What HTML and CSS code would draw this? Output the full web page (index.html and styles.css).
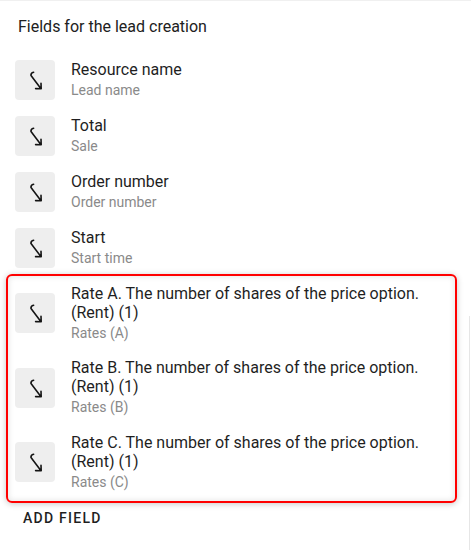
FILE: index.html
```html
<!DOCTYPE html>
<html lang="en">
<head>
<meta charset="utf-8">
<title>Fields for the lead creation</title>
<link rel="stylesheet" href="styles.css">
</head>
<body>
<div class="page">
  <main class="content">
    <h2 class="heading">Fields for the lead creation</h2>
    <ul class="fields">
      <li class="field">
        <span class="field-icon"><svg viewBox="0 0 40 40" width="40" height="40"><path d="M18.6 12.2 Q15.6 12.8 16 15.6 L25.8 28.4 M20.6 28.6 L26.2 28.8 L26 23.4" /></svg></span>
        <div class="field-text"><div class="field-title">Resource name</div><div class="field-sub">Lead name</div></div>
      </li>
      <li class="field">
        <span class="field-icon"><svg viewBox="0 0 40 40" width="40" height="40"><path d="M18.6 12.2 Q15.6 12.8 16 15.6 L25.8 28.4 M20.6 28.6 L26.2 28.8 L26 23.4" /></svg></span>
        <div class="field-text"><div class="field-title">Total</div><div class="field-sub">Sale</div></div>
      </li>
      <li class="field">
        <span class="field-icon"><svg viewBox="0 0 40 40" width="40" height="40"><path d="M18.6 12.2 Q15.6 12.8 16 15.6 L25.8 28.4 M20.6 28.6 L26.2 28.8 L26 23.4" /></svg></span>
        <div class="field-text"><div class="field-title">Order number</div><div class="field-sub">Order number</div></div>
      </li>
      <li class="field">
        <span class="field-icon"><svg viewBox="0 0 40 40" width="40" height="40"><path d="M18.6 12.2 Q15.6 12.8 16 15.6 L25.8 28.4 M20.6 28.6 L26.2 28.8 L26 23.4" /></svg></span>
        <div class="field-text"><div class="field-title">Start</div><div class="field-sub">Start time</div></div>
      </li>
    </ul>
    <ul class="fields highlighted">
      <li class="field">
        <span class="field-icon"><svg viewBox="0 0 40 40" width="40" height="40"><path d="M18.6 12.2 Q15.6 12.8 16 15.6 L25.8 28.4 M20.6 28.6 L26.2 28.8 L26 23.4" /></svg></span>
        <div class="field-text"><div class="field-title">Rate A. The number of shares of the price option. (Rent) (1)</div><div class="field-sub">Rates (A)</div></div>
      </li>
      <li class="field">
        <span class="field-icon"><svg viewBox="0 0 40 40" width="40" height="40"><path d="M18.6 12.2 Q15.6 12.8 16 15.6 L25.8 28.4 M20.6 28.6 L26.2 28.8 L26 23.4" /></svg></span>
        <div class="field-text"><div class="field-title">Rate B. The number of shares of the price option. (Rent) (1)</div><div class="field-sub">Rates (B)</div></div>
      </li>
      <li class="field">
        <span class="field-icon"><svg viewBox="0 0 40 40" width="40" height="40"><path d="M18.6 12.2 Q15.6 12.8 16 15.6 L25.8 28.4 M20.6 28.6 L26.2 28.8 L26 23.4" /></svg></span>
        <div class="field-text"><div class="field-title">Rate C. The number of shares of the price option. (Rent) (1)</div><div class="field-sub">Rates (C)</div></div>
      </li>
    </ul>
    <button class="add-btn" type="button">Add field</button>
  </main>
  <div class="rail"></div>
</div>
</body>
</html>
```

FILE: styles.css
```css
* { box-sizing: border-box; }

html, body {
  margin: 0;
  padding: 0;
  background: #ffffff;
}

body {
  font-family: Roboto, "Liberation Sans", Arial, sans-serif;
  color: #212121;
  width: 471px;
  height: 551px;
  overflow: hidden;
}

.page {
  display: flex;
  border-top: 1px solid #f0f0f0;
  min-height: 550px;
}

.content {
  flex: 1;
  min-width: 0;
}

.rail {
  width: 1px;
  margin-right: 1px;
  margin-top: 315px;
  background: #e6e6e6;
}

.heading {
  margin: 0;
  padding: 14px 0 13px 18px;
  font-size: 16px;
  line-height: 24px;
  font-weight: 400;
  color: #212121;
}

.fields {
  list-style: none;
  margin: 0;
  padding: 0;
}

.field {
  display: flex;
  align-items: center;
  gap: 16px;
  padding: 8px 12px 8px 15px;
}

.field-icon {
  flex: 0 0 40px;
  width: 40px;
  height: 40px;
  border-radius: 4px;
  background: #eeeeee;
  display: flex;
}

.field-icon svg {
  fill: none;
  stroke: #141414;
  stroke-width: 1.6;
  stroke-linecap: round;
  stroke-linejoin: round;
}

.field-text {
  min-width: 0;
  padding-right: 24px;
}

.field-title {
  font-size: 16px;
  line-height: 19px;
  color: #1f1f1f;
}

.field-sub {
  margin-top: 1px;
  font-size: 14px;
  line-height: 20px;
  color: #8a8a8a;
}

.highlighted {
  position: relative;
}

.highlighted .field {
  padding-top: 7.75px;
  padding-bottom: 7.75px;
}

.highlighted::after {
  content: "";
  position: absolute;
  top: -2px;
  left: 6px;
  right: 12px;
  bottom: -3px;
  border: 2px solid #ff0000;
  border-radius: 6px;
  box-shadow: 0 1px 6px rgba(0, 0, 0, 0.22), inset 0 0 6px rgba(0, 0, 0, 0.12);
  pointer-events: none;
}

.add-btn {
  display: block;
  margin: 0 0 0 15px;
  height: 36px;
  padding: 0 8px;
  border: 0;
  background: transparent;
  font-family: Roboto, "Liberation Sans", Arial, sans-serif;
  font-size: 14px;
  font-weight: 500;
  letter-spacing: 1.25px;
  text-transform: uppercase;
  color: #1f1f1f;
  cursor: pointer;
}
```
